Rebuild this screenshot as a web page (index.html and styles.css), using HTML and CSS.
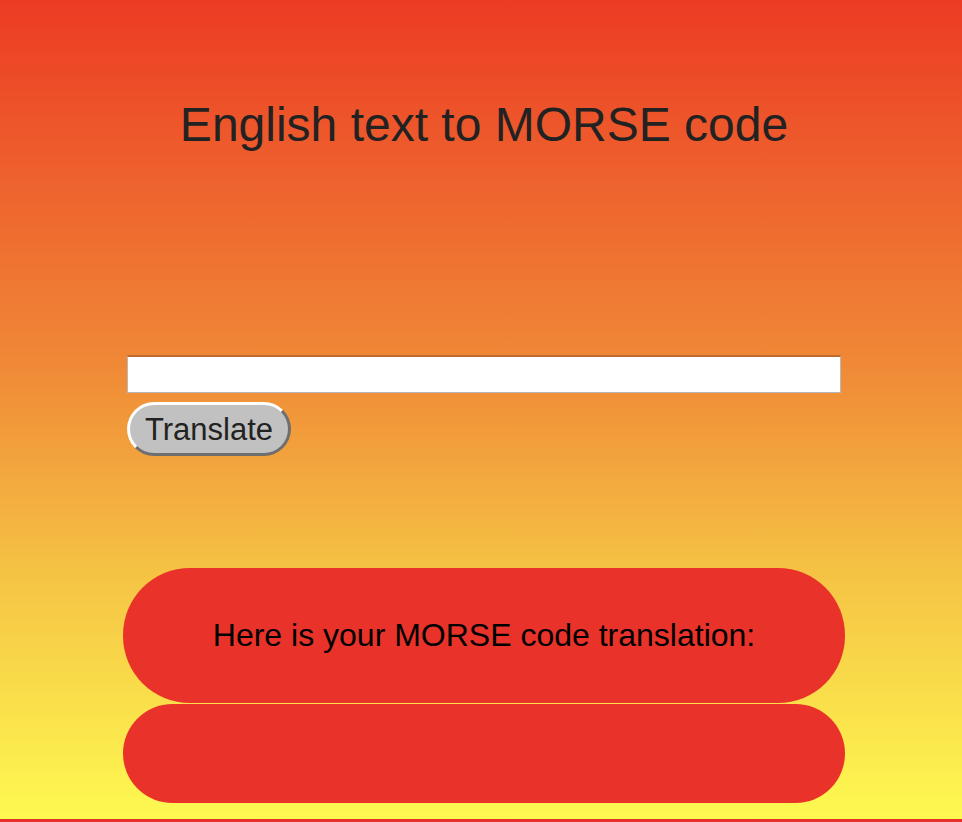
FILE: index.html
```html
<!DOCTYPE html>
<html lang="en">
<head>
<meta charset="utf-8">
<title>English text to MORSE code</title>
<link rel="stylesheet" href="styles.css">
</head>
<body>
<main class="page">
  <h1 class="title">English text to MORSE code</h1>
  <form class="form" onsubmit="return false">
    <input class="text-input" type="text" aria-label="English text">
    <button class="translate-btn" type="submit">Translate</button>
  </form>
  <section class="result">
    <div class="result-head">Here is your MORSE code translation:</div>
    <div class="result-body"></div>
  </section>
</main>
</body>
</html>
```
FILE: styles.css
```css
html {
  background: #e8302a;
  height: 100%;
}
body {
  margin: 0;
  min-height: 819px;
  background: linear-gradient(to bottom, #ec3b24 0%, #f08a37 45%, #f5c344 70%, #fef951 100%);
  font-family: "Liberation Sans", Arial, Helvetica, sans-serif;
}
.page {
  width: 722px;
  margin-left: 123px;
  padding-top: 97px;
}
.title {
  margin: 0;
  font-size: 48px;
  font-weight: normal;
  line-height: 55px;
  color: #222;
  text-align: center;
}
.form {
  padding: 203px 4px 0;
  display: flex;
  flex-direction: column;
  align-items: flex-start;
}
.text-input {
  box-sizing: border-box;
  width: 714px;
  height: 38px;
  margin: 0;
  border: 1px solid #b8b8b8;
  border-top: 2px solid #c06a2e;
  background: #fff;
  font-size: 20px;
  padding: 0 4px;
}
.translate-btn {
  box-sizing: border-box;
  margin-top: 9px;
  height: 54px;
  width: 164px;
  padding: 0;
  border-width: 3px;
  border-style: solid;
  border-color: #ffffff #6e6e6e #6e6e6e #ffffff;
  border-radius: 27px;
  background: #c1c1c1;
  color: #222;
  font-family: "Liberation Sans", Arial, Helvetica, sans-serif;
  font-size: 31px;
  line-height: 1;
}
.result {
  margin-top: 112px;
  display: flex;
  flex-direction: column;
  gap: 1px;
}
.result-head {
  height: 135px;
  border-radius: 67px;
  background: #e9332a;
  color: #000;
  font-size: 32px;
  display: flex;
  align-items: center;
  justify-content: center;
}
.result-body {
  height: 99px;
  border-radius: 50px;
  background: #e9332a;
}
```
